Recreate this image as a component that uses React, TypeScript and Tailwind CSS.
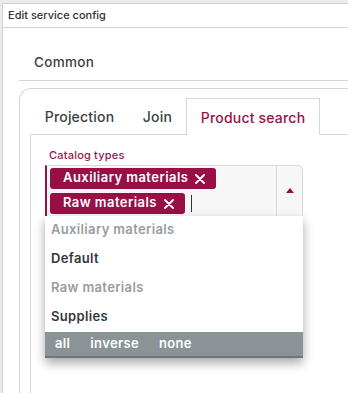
import React from "react";

const font = { fontFamily: "Inter, 'Noto Sans', sans-serif" };

function Tag({ label }: { label: string }) {
  return (
    <div className="flex h-[21px] items-center gap-[7px] rounded-[3px] bg-[#970f45] pl-[13px] pr-[11px] text-[13px] font-semibold tracking-[0.45px] text-white">
      <span>{label}</span>
      <svg width="10" height="10" viewBox="0 0 10 10" className="mt-[1px]">
        <path d="M1 1 L9 9 M9 1 L1 9" stroke="white" strokeWidth="1.8" strokeLinecap="round" />
      </svg>
    </div>
  );
}

export default function App() {
  return (
    <div className="h-[393px] w-[348px] overflow-hidden bg-[#ececec] pl-[2px] pt-[3px]" style={font}>
      <div className="h-[400px] border-l border-t border-[#cfcfcf] bg-white">
        <div className="flex h-[24px] items-center border-b border-[#d4d4d4] pl-[5px] text-[11px] font-medium text-[#2f3338]">
          Edit service config
        </div>
        <div className="pl-[16px]">
          <div className="flex h-[53px] items-end border-b border-[#d6d6d6] pb-[8px] pl-[15px] text-[13.5px] font-medium tracking-[0.3px] text-[#3a3f44]">
            Common
          </div>
          <div className="mt-[7px] h-[320px] rounded-tl-[12px] border-l border-t border-[#d6d6d6] pt-[9px]">
            <div className="flex pl-[10px]">
              <div className="flex h-[37px] w-[99px] items-center justify-center border-b border-[#d6d6d6] text-[14px] font-medium tracking-[0.2px] text-[#3a3f44]">
                Projection
              </div>
              <div className="flex h-[37px] w-[57px] items-center justify-center border-b border-[#d6d6d6] text-[14px] font-medium tracking-[0.2px] text-[#3a3f44]">
                Join
              </div>
              <div className="flex h-[37px] w-[134px] items-center justify-center border-l border-r border-t border-[#d6d6d6] text-[14px] font-medium tracking-[0.2px] text-[#9b1148]">
                Product search
              </div>
              <div className="h-[37px] flex-1 border-b border-[#d6d6d6]" />
            </div>
            <div className="ml-[10px] h-[300px] border-l border-[#d6d6d6] pl-[14px] pt-[12px]">
              <div className="pl-[4px] text-[11px] font-medium tracking-[0.2px] text-[#8e1a4c]">Catalog types</div>
              <div className="relative mt-[1px] w-[258px]">
                <div className="flex h-[51px] rounded-tr-[5px] border-l-2 border-r border-t border-l-[#970f45] border-r-[#d8d8d8] border-t-[#d8d8d8] bg-[#f7f7f7]">
                  <div className="flex flex-1 flex-col gap-[4px] pl-[3px] pt-[2px]">
                    <div className="flex">
                      <Tag label="Auxiliary materials" />
                    </div>
                    <div className="flex items-center gap-[6px]">
                      <Tag label="Raw materials" />
                      <div className="h-[17px] w-[1px] bg-[#333]" />
                    </div>
                  </div>
                  <div className="flex w-[26px] items-center justify-center border-l border-[#d8d8d8]">
                    <svg width="8" height="5" viewBox="0 0 8 5">
                      <path d="M0 5 L4 0 L8 5 Z" fill="#970f45" />
                    </svg>
                  </div>
                </div>
                <div className="absolute left-0 top-[51px] w-[258px] bg-white shadow-[0_5px_10px_rgba(0,0,0,0.35)]">
                  <div className="flex h-[29px] items-center pl-[6px] text-[13px] font-semibold tracking-[0.35px] text-[#979ca1]">Auxiliary materials</div>
                  <div className="flex h-[29px] items-center pl-[6px] text-[13px] font-semibold tracking-[0.35px] text-[#33383d]">Default</div>
                  <div className="flex h-[29px] items-center pl-[6px] text-[13px] font-semibold tracking-[0.35px] text-[#979ca1]">Raw materials</div>
                  <div className="flex h-[29px] items-center pl-[6px] text-[13px] font-semibold tracking-[0.35px] text-[#33383d]">Supplies</div>
                  <div className="flex h-[26px] items-center gap-[20px] border-b-2 border-[#6f7679] bg-[#8c9396] pl-[10px] text-[13px] font-semibold tracking-[0.35px] text-white">
                    <span>all</span>
                    <span>inverse</span>
                    <span>none</span>
                  </div>
                </div>
              </div>
            </div>
          </div>
        </div>
      </div>
    </div>
  );
}
